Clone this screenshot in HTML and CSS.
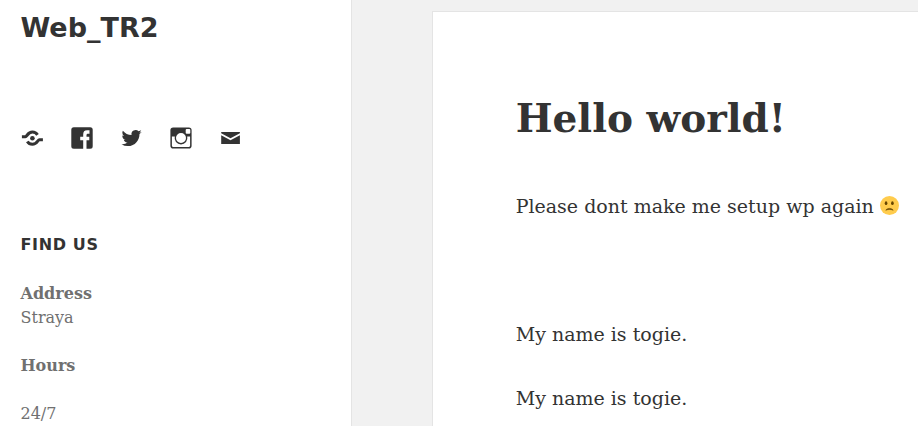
FILE: index.html
```html
<!DOCTYPE html>
<html lang="en">
<head>
<meta charset="utf-8">
<title>Web_TR2</title>
<link rel="stylesheet" href="styles.css">
</head>
<body>
<div class="site">
  <aside class="sidebar">
    <p class="site-title">Web_TR2</p>
    <nav class="social">
      <svg viewBox="-0.400 0 24 24"><circle cx="12" cy="12.200" r="2.300"/><path d="M1.500 10.700h3.500C6.700 10.700 7.200 6.100 12 6.100c2.300 0 4 1 5.100 2.800M22.500 13.700H19c-1.700 0-2.200 4.600-7 4.600-2.300 0-4-1-5.100-2.800" fill="none" stroke="#333" stroke-width="3"/></svg>
      <svg viewBox="0 0 24 24"><path fill-rule="evenodd" d="M3.800 1.300h16.400a2.500 2.500 0 0 1 2.500 2.500v16.400a2.500 2.500 0 0 1-2.500 2.500h-3.700v-8.500h2.800v-3.400h-2.800V9.200c0-1 .4-1.500 1.500-1.500h1.500V4.200h-2.400c-2.800 0-3.900 1.600-3.900 4.200v2.400h-3v3.400h3v8.500H3.800a2.500 2.500 0 0 1-2.500-2.500V3.800a2.500 2.500 0 0 1 2.500-2.500z"/></svg>
      <svg viewBox="-0.500 0 24 24"><path d="M22.230 5.920a8.200 8.200 0 0 1-2.360.650 4.120 4.120 0 0 0 1.800-2.270 8.200 8.200 0 0 1-2.600 1 4.100 4.100 0 0 0-7 3.740A11.650 11.650 0 0 1 3.400 4.630a4.100 4.100 0 0 0-.550 2.060 4.100 4.100 0 0 0 1.820 3.420 4.100 4.100 0 0 1-1.860-.510v.050a4.100 4.100 0 0 0 3.300 4.030 4.100 4.100 0 0 1-1.860.070 4.100 4.100 0 0 0 3.840 2.850A8.250 8.250 0 0 1 2 18.280a11.620 11.620 0 0 0 6.290 1.840c7.550 0 11.680-6.250 11.680-11.670l-.010-.530a8.350 8.350 0 0 0 2.270-2z"/></svg>
      <svg viewBox="0 0 24 24"><path fill-rule="evenodd" d="M4.200 1.400h15.600a2.800 2.800 0 0 1 2.800 2.800v15.600a2.800 2.800 0 0 1-2.800 2.800H4.200a2.800 2.800 0 0 1-2.800-2.800V4.200a2.800 2.800 0 0 1 2.800-2.800zM17.700 3.100a1 1 0 0 0-1 1v2.600a1 1 0 0 0 1 1h2.600a1 1 0 0 0 1-1V4.100a1 1 0 0 0-1-1zM2.900 10.600v9c0 .9.600 1.500 1.500 1.500h15.200c.9 0 1.500-.6 1.500-1.500v-9h-2.900a6.400 6.400 0 1 1-12.400 0zM12 7a5 5 0 1 0 0 10 5 5 0 0 0 0-10z"/></svg>
      <svg viewBox="-0.500 0 24 24"><path d="M2.700 6h18.700v1.200L12 12.300 2.700 7.200zM2.700 9.300 12 14.300l9.400-5V18H2.700z"/></svg>
    </nav>
    <section class="widget">
      <h2>Find Us</h2>
      <p><strong>Address</strong><br>Straya</p>
      <p><strong>Hours</strong></p>
      <p>24/7</p>
    </section>
  </aside>
  <main class="content">
    <article class="post">
      <h1>Hello world!</h1>
      <p>Please dont make me setup wp again <svg class="emoji" viewBox="0 0 36 36"><circle cx="18" cy="18" r="18" fill="#ffcc4d"/><ellipse cx="11.500" cy="13.500" rx="2.500" ry="3.600" fill="#664500"/><ellipse cx="23.500" cy="13.500" rx="2.500" ry="3.600" fill="#664500"/><path d="M11 27c2-4.700 12-4.700 14 0-4-2-10-2-14 0z" fill="#664500" stroke="#664500"/></svg></p>
      <p>&nbsp;</p>
      <p>My name is togie.</p>
      <p>My name is togie.</p>
    </article>
  </main>
</div>
</body>
</html>
```
FILE: styles.css
```css
* {
  box-sizing: border-box;
}

body {
  margin: 0;
  background: #f1f1f1;
  color: #333;
  font-family: "DejaVu Serif", serif;
}

.site {
  display: flex;
  height: 426px;
  overflow: hidden;
}

.sidebar {
  flex: 0 0 352px;
  padding: 10px 20.5px 0;
  background: #fff;
  border-right: 1px solid #e4e4e4;
}

.site-title {
  margin: 0;
  font: bold 27px/36px "DejaVu Sans", sans-serif;
}

.social {
  display: flex;
  gap: 25.5px;
  margin: 80px 0 83px -0.5px;
}

.social svg {
  flex: none;
  width: 24px;
  height: 24px;
  fill: #333;
}

.widget {
  color: #707070;
  font-size: 16px;
  line-height: 24px;
}

.widget h2 {
  margin: 0 0 25px;
  color: #333;
  font: bold 16px/24px "DejaVu Sans", sans-serif;
  letter-spacing: 0.04em;
  text-transform: uppercase;
}

.widget p {
  margin: 0 0 24px;
}

.widget p:last-child {
  margin-bottom: 0;
}

.content {
  display: flex;
  flex: 1;
  min-width: 0;
  padding: 11px 0 0 80px;
}

.post {
  flex: 1;
  padding: 82px 0 0 82.7px;
  background: #fff;
  border: 1px solid #e4e4e4;
  border-width: 1px 0 0 1px;
  font-size: 19px;
  line-height: 32px;
  white-space: nowrap;
}

.post h1 {
  margin: 0 0 48px;
  font-size: 39px;
  line-height: 48px;
}

.post p {
  margin: 0 0 32px;
}

.post p:last-child {
  margin-bottom: 0;
}

.emoji {
  width: 19px;
  height: 19px;
  vertical-align: -1.9px;
}
```
